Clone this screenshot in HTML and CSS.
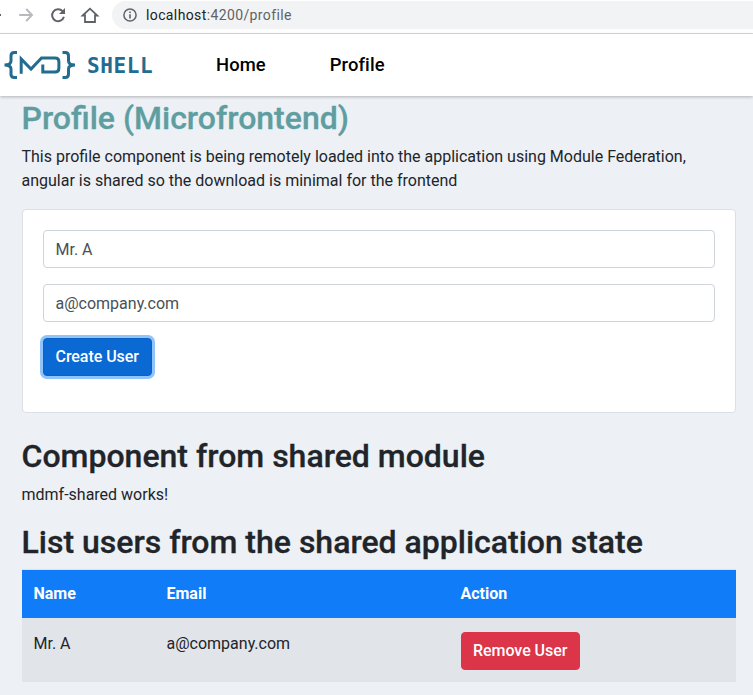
FILE: index.html
```html
<!DOCTYPE html>
<html lang="en">
<head>
<meta charset="utf-8">
<title>Profile</title>
<link rel="stylesheet" href="styles.css">
</head>
<body>
<div class="browser-bar">
  <svg class="browser-icons" width="112" height="33" viewBox="0 0 112 33" fill="none">
    <path d="M0 15H1" stroke="#5f6368" stroke-width="2"/>
    <path d="M19.2 15H31.5M26.2 9L32 15L26.2 21" stroke="#b7b9bc" stroke-width="1.9"/>
    <path d="M62.6 11.2A6 6 0 1 0 63.9 16.8" stroke="#5f6368" stroke-width="2"/>
    <path d="M65 8V14H59Z" fill="#5f6368"/>
    <path d="M82.7 15.5L90 8.7L97.3 15.5H95V22H85V15.5Z" stroke="#5f6368" stroke-width="1.8"/>
  </svg>
  <div class="address">
    <svg class="info" width="14" height="14" viewBox="0 0 14 14" fill="none">
      <circle cx="7" cy="7" r="6.1" stroke="#5f6368" stroke-width="1.5"/>
      <path d="M7 6.2V10.5M7 3.4V5" stroke="#5f6368" stroke-width="1.6"/>
    </svg>
    <span class="host">localhost</span><span class="path">:4200/profile</span>
  </div>
</div>
<nav class="navbar">
  <svg class="logo" width="72" height="30" viewBox="0 0 72 30" fill="none">
    <g stroke="#226c90" stroke-width="3">
      <path d="M13 2.5H10.2Q7 2.5 7 5.7V11Q7 15 0.5 15Q7 15 7 19V24.3Q7 27.5 10.2 27.5H13"/>
      <path d="M58.5 2.5H61.3Q64.5 2.5 64.5 5.7V11Q64.5 15 71 15Q64.5 15 64.5 19V24.3Q64.5 27.5 61.3 27.5H58.5"/>
      <path d="M17.2 23.7V9L27 19L37.5 7.9H51Q54.9 7.9 54.9 11.8V18.2Q54.9 22.1 51 22.1H38.8V14.5"/>
    </g>
  </svg>
  <span class="brand">SHELL</span>
  <a class="nav-link">Home</a>
  <a class="nav-link">Profile</a>
</nav>
<main class="container">
  <h2 class="title">Profile (Microfrontend)</h2>
  <p>This profile component is being remotely loaded into the application using Module Federation, angular is shared so the download is minimal for the frontend</p>
  <form class="card">
    <input class="field" type="text" value="Mr. A">
    <input class="field" type="text" value="a@company.com">
    <button class="btn btn-primary" type="button">Create User</button>
  </form>
  <h2>Component from shared module</h2>
  <p>mdmf-shared works!</p>
  <h2>List users from the shared application state</h2>
  <table class="users">
    <thead><tr><th class="col-name">Name</th><th class="col-email">Email</th><th>Action</th></tr></thead>
    <tbody><tr><td>Mr. A</td><td>a@company.com</td><td><button class="btn btn-danger" type="button">Remove User</button></td></tr></tbody>
  </table>
</main>
</body>
</html>
```
FILE: styles.css
```css
* { box-sizing: border-box; }
body {
  margin: 0;
  height: 695px;
  overflow: hidden;
  background: #edf0f5;
  color: #212529;
  font: 400 16px/24px Roboto, sans-serif;
}
.browser-bar {
  display: flex;
  height: 34px;
  background: #fff;
  border-bottom: 1px solid #d9dadc;
}
.browser-icons { flex: none; }
.address {
  flex: 1;
  display: flex;
  align-items: center;
  height: 28px;
  margin-top: 1px;
  padding-left: 11px;
  background: #f1f3f4;
  border-radius: 14px 0 0 14px;
  font-size: 14px;
  letter-spacing: 0.38px;
}
.info { margin-right: 9px; }
.host { color: #202124; }
.path { color: #5f6368; }
.navbar {
  position: relative;
  display: flex;
  align-items: center;
  height: 62px;
  padding-left: 4px;
  background: #fff;
  box-shadow: 0 1px 3px rgba(0, 0, 0, 0.26);
}
.brand {
  width: 66px;
  margin: 1px 63px 0 11px;
  color: #226c90;
  font: 700 21px/24px "DejaVu Sans Mono", monospace;
  letter-spacing: 0.6px;
}
.nav-link {
  margin-right: 64px;
  color: #000;
  font-size: 18.4px;
  font-weight: 500;
  letter-spacing: 0.1px;
}
.container { padding: 2.6px 17px 0 22px; }
h2 {
  margin: 0 0 8px;
  font-size: 32px;
  line-height: 38.4px;
  font-weight: 500;
  text-indent: -0.5px;
  -webkit-text-stroke: 0.3px;
}
.title { color: #5f9ea0; }
p { margin: 0 0 16px -0.5px; }
.card {
  height: 204px;
  margin-bottom: 23.6px;
  padding: 20px;
  background: #fff;
  border: 1px solid #dcdfe3;
  border-radius: 4px;
}
.field {
  display: block;
  width: 100%;
  height: 38px;
  margin-bottom: 16px;
  padding: 5px 12px 5px 11.5px;
  border: 1px solid #ced4da;
  border-radius: 4px;
  background: #fff;
  color: #495057;
  font: inherit;
  line-height: 23px;
}
.btn {
  display: block;
  height: 38px;
  padding: 6px 11.5px;
  border: 1px solid;
  border-radius: 4px;
  color: #fff;
  font: 500 16px/24px Roboto, sans-serif;
  letter-spacing: -0.05px;
}
.btn-primary {
  padding: 6px 12px 6px 11.5px;
  background: #0b69d4;
  border-color: #0a62c7;
  box-shadow: 0 0 0 3px #90c4fb;
}
.btn-danger { background: #dc3448; border-color: #dc3448; }
.users {
  width: 100%;
  margin-top: -0.6px;
  border-collapse: collapse;
  table-layout: fixed;
}
.users th {
  height: 49px;
  padding: 0 12px 0 11.5px;
  background: #107cf8;
  color: #fff;
  text-align: left;
  font-weight: 700;
}
.users thead { border-top: 1px solid #dee2e6; }
.users td {
  height: 64px;
  padding: 14px 12px 12px 11.5px;
  background: #e1e4e9;
  vertical-align: top;
}
.col-name { width: 133px; }
.col-email { width: 294px; }
```
